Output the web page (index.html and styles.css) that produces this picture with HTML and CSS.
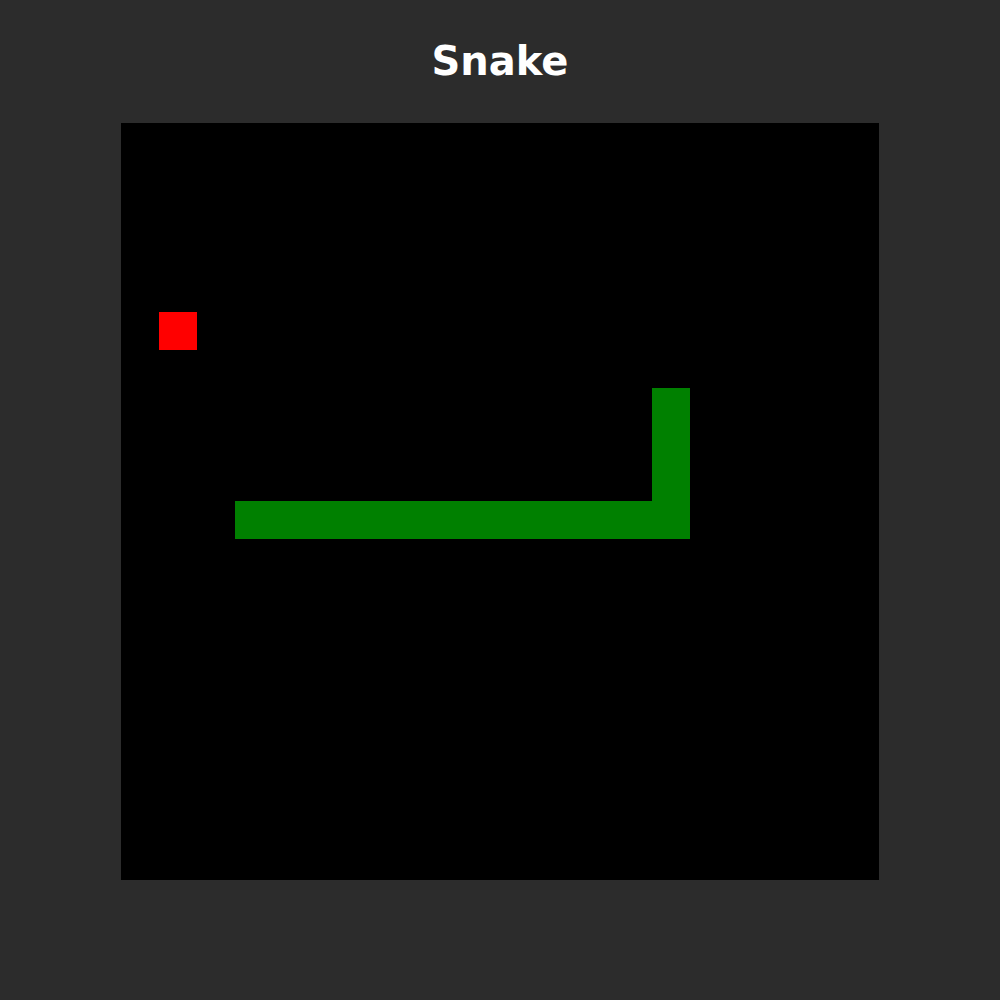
FILE: index.html
```html
<!DOCTYPE html>
<html>
<head>
<meta charset="utf-8">
<title>Snake</title>
<link rel="stylesheet" href="styles.css">
</head>
<body>
<main class="game">
  <h1 class="title">Snake</h1>
  <div class="board">
    <div class="cell food" style="grid-column:2;grid-row:6"></div>
    <div class="cell snake" style="grid-column:15;grid-row:8 / span 4"></div>
    <div class="cell snake" style="grid-column:4 / span 11;grid-row:11"></div>
  </div>
</main>
</body>
</html>
```
FILE: styles.css
```css
html, body {
  margin: 0;
  padding: 0;
  background: #2c2c2c;
  height: 100%;
}
.game {
  display: flex;
  flex-direction: column;
  align-items: center;
  padding-top: 41px;
}
.title {
  margin: 0;
  font-family: "DejaVu Sans", sans-serif;
  font-weight: bold;
  font-size: 40px;
  line-height: 40px;
  color: #ffffff;
  letter-spacing: 0;
}
.board {
  margin-top: 42px;
  width: 758px;
  height: 757px;
  background: #000000;
  display: grid;
  grid-template-columns: repeat(20, 1fr);
  grid-template-rows: repeat(20, 1fr);
}
.food {
  background: #ff0000;
}
.snake {
  background: #008000;
}
```
